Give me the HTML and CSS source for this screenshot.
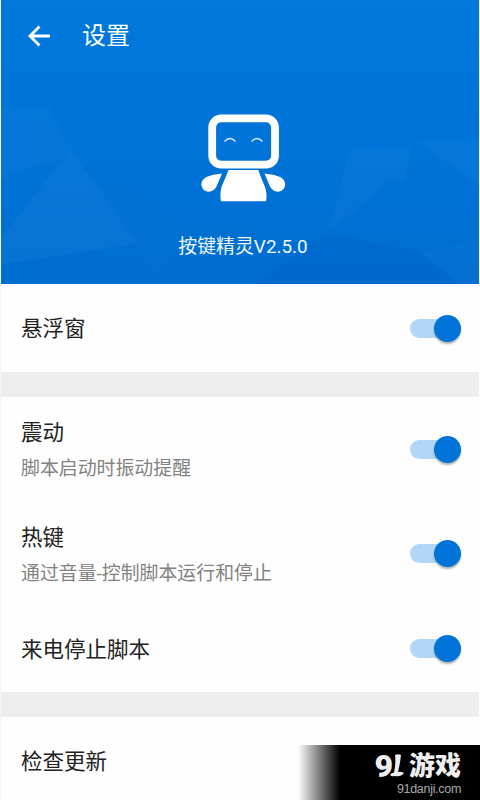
FILE: index.html
```html
<!DOCTYPE html>
<html lang="zh-CN">
<head>
<meta charset="utf-8">
<title>设置</title>
<link rel="stylesheet" href="styles.css">
</head>
<body>
<main class="screen">
  <header class="hero">
    <svg class="facets" viewBox="1 0 478 284" preserveAspectRatio="none" aria-hidden="true">
      <g fill="#fff">
        <path opacity=".02" d="M1 107L50 107L70 149L1 133Z"/>
        <path opacity=".02" d="M1 133L70 149L56 163L32 167L1 179Z"/>
        <path opacity=".03" d="M70 149L138 244L1 264V239Z"/>
        <path opacity=".008" d="M132 182L190 235L158 274L138 244L90 177Z"/>
        <path opacity=".025" d="M349 149L412 146L404 181L387 181L372 196L328 232Z"/>
        <path opacity=".025" d="M416 141L479 141V185Z"/>
        <path opacity=".02" d="M420 252L479 239V284H460Z"/>
      </g>
      <path fill="#003f96" opacity=".08" d="M328 233L420 252L460 284H254Z"/>
    </svg>
    <div class="bar">
      <svg class="back" viewBox="0 0 24 22" aria-label="返回"><path d="M23 11H3M12.500 1.500L3 11L12.500 20.500"/></svg>
      <h1>设置</h1>
    </div>
    <div class="brand">
      <svg class="robot" viewBox="200 113 86 90" aria-hidden="true">
        <rect x="212.2" y="118.3" width="62.8" height="46.4" rx="9" fill="none" stroke="#fff" stroke-width="7.8"/>
        <path d="M224.5 141.500Q230 135.500 235.500 141.500M251.500 141.500Q257 135.500 262.500 141.500" fill="none" stroke="#d9ebfb" stroke-width="1.3"/>
        <g fill="#fff">
          <path d="M228.500 170H258.300Q261 178 265 187Q267.500 194 266 201.300H221Q219.500 194 221.500 187Q224 181 228.500 170Z"/>
          <path d="M222 173.500Q211 174.500 205.500 177.500C200.500 180.500 199.500 188 205.500 191C210 193 214.500 190.500 216.500 186.500Z"/>
          <path d="M264.500 173.500Q275.500 174.500 281 177.500C286 180.500 287 188 281 191C276.500 193 272 190.500 270 186.500Z"/>
        </g>
      </svg>
      <p>按键精灵V2.5.0</p>
    </div>
  </header>

  <section class="group">
    <div class="row"><h2>悬浮窗</h2><span class="switch"></span></div>
  </section>
  <section class="group">
    <div class="row tall"><div><h2>震动</h2><p>脚本启动时振动提醒</p></div><span class="switch"></span></div>
    <div class="row tall"><div><h2>热键</h2><p>通过音量-控制脚本运行和停止</p></div><span class="switch"></span></div>
    <div class="row last"><h2>来电停止脚本</h2><span class="switch"></span></div>
  </section>
  <section class="group">
    <div class="row"><h2>检查更新</h2></div>
  </section>

  <aside class="watermark">
    <div class="logo">
      <span class="nine">9</span>
      <svg class="flourish" viewBox="0 0 14 24" aria-hidden="true"><path d="M5 1Q8 -.5 11 1Q10 10 8 18Q11 17 14 19Q11 23 5 22Q2 23 0 21Q1 18.500 4 18.500Q6 10 5 1Z"/></svg>
      <span class="game">游戏</span>
    </div>
    <div class="site">91danji.com</div>
  </aside>
</main>
</body>
</html>
```
FILE: styles.css
```css
* { box-sizing: border-box; margin: 0; padding: 0; }
body { background: #fff; font-family: Roboto, "Noto Sans CJK SC", sans-serif; }
h1, h2 { font-weight: 400; }
.screen {
  position: relative;
  width: 480px;
  height: 800px;
  padding-right: 1px;
  overflow: hidden;
  background: #fefefe;
  border-left: 1px solid #f3f5f8;
}
.hero {
  position: relative;
  height: 284px;
  color: #fff;
  background: linear-gradient(#0078dc, #0074d8 50%, #006dd0);
}
.facets { position: absolute; inset: 0; width: 100%; height: 100%; }
.bar {
  position: relative;
  display: flex;
  align-items: center;
  height: 71px;
  padding-left: 26px;
}
.back { width: 24px; height: 22px; margin-right: 31px; fill: none; stroke: #fff; stroke-width: 2.8; }
.bar h1 { padding-top: 1px; font-size: 24px; line-height: 36px; }
.brand {
  position: relative;
  display: flex;
  flex-direction: column;
  align-items: center;
  padding-top: 42px;
  padding-left: 6px;
}
.robot { width: 86px; height: 90px; }
.brand p { margin-top: 30px; font-size: 18.900px; line-height: 28px; color: #eef6ff; }
.group + .group { border-top: 25px solid #eee; }
.row {
  display: flex;
  align-items: center;
  justify-content: space-between;
  height: 88px;
  padding: 0 18px 0 20px;
}
.row.tall { height: 104.500px; }
.row.last { height: 85px; margin-bottom: 1px; }
.row h2 { padding-top: 2px; font-size: 21.500px; line-height: 32px; color: #222; }
.row p { margin-top: 5px; padding-top: 1px; font-size: 18.900px; line-height: 28px; color: #828282; }
.switch {
  position: relative;
  width: 51px;
  height: 19px;
  border-radius: 10px;
  background: #b2d6f5;
}
.switch::after {
  content: "";
  position: absolute;
  top: -4px;
  right: 0;
  width: 27px;
  height: 27px;
  border-radius: 50%;
  background: #0074d9;
  box-shadow: 0 2px 2px rgba(0, 0, 0, .3);
}
.watermark {
  position: absolute;
  right: 0;
  bottom: 0;
  width: 182px;
  height: 55px;
  padding: 9px 19px 0 0;
  background: linear-gradient(90deg, rgba(0, 0, 0, 0), #000 42px);
}
.logo { display: flex; justify-content: flex-end; height: 24px; color: #eee; }
.nine { font: 900 32px/24px Roboto, sans-serif; }
.flourish { width: 14px; height: 24px; margin: 0 5px 0 -3px; fill: #eee; }
.game { height: 24px; font: 900 26px/20px "Noto Sans CJK SC", sans-serif; }
.site {
  margin-top: 4px;
  font: 12.500px/14px "Liberation Sans", sans-serif;
  letter-spacing: -.3px;
  text-align: right;
  color: #aaa;
}
```
